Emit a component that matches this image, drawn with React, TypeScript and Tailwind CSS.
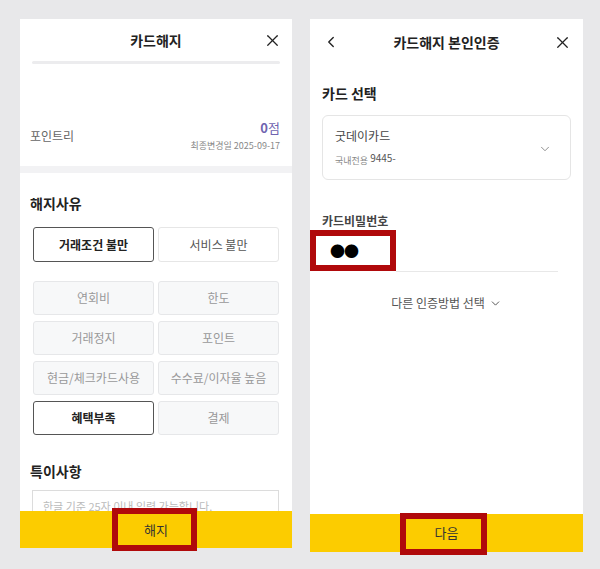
import { ChevronDown, ChevronLeft, X } from "lucide-react";

const font = { fontFamily: '"Noto Sans CJK KR", "Noto Sans", sans-serif' };

const reasons = [
  { label: "연회비", on: false },
  { label: "한도", on: false },
  { label: "거래정지", on: false },
  { label: "포인트", on: false },
  { label: "현금/체크카드사용", on: false },
  { label: "수수료/이자율 높음", on: false },
  { label: "혜택부족", on: true },
  { label: "결제", on: false },
];

function CancelPanel() {
  return (
    <div className="relative w-[272px] h-[529px] flex flex-col bg-[#f2f2f4]">
      <div className="flex-1 overflow-hidden flex flex-col gap-[7px]">
        {/* top card */}
        <div className="shrink-0 bg-white h-[147px] px-[12px]">
          <div className="relative h-[42px] flex items-center justify-center">
            <span className="text-[14px] font-bold text-[#222]">카드해지</span>
            <X className="absolute right-[-2px] top-[12px] w-[19px] h-[19px] text-[#222]" strokeWidth={1.6} />
          </div>
          <div className="h-[3px] rounded-full bg-[#ececee]" />
          <div className="mt-[55px] flex items-end justify-between">
            <span className="text-[12px] text-[#666] ml-[-2px] mb-[8px]">포인트리</span>
            <div className="flex flex-col items-end">
              <span className="text-[13px] text-[#6f64b0] leading-[18px]">
                <b>0</b>점
              </span>
              <span className="text-[9px] text-[#888] leading-[14px] mt-[2px]">최종변경일 2025-09-17</span>
            </div>
          </div>
        </div>

        {/* reasons */}
        <div className="shrink-0 bg-white flex-1 px-[13px] pt-[20px]">
          <div className="text-[14px] font-bold text-[#222] ml-[-3px] leading-[20px]">해지사유</div>
          <div className="mt-[14px] grid grid-cols-2 gap-[4px]">
            <div className="h-[35px] rounded-[3px] border border-[#555] flex items-center justify-center text-[12px] font-bold text-[#222]">
              거래조건 불만
            </div>
            <div className="h-[35px] rounded-[3px] border border-[#e6e6e6] flex items-center justify-center text-[12px] text-[#555]">
              서비스 불만
            </div>
          </div>
          <div className="mt-[19px] grid grid-cols-2 gap-x-[4px] gap-y-[6px]">
            {reasons.map((r) =>
              r.on ? (
                <div
                  key={r.label}
                  className="h-[34px] rounded-[3px] border border-[#555] bg-white flex items-center justify-center text-[12px] font-bold text-[#222]"
                >
                  {r.label}
                </div>
              ) : (
                <div
                  key={r.label}
                  className="h-[34px] rounded-[3px] border border-[#e6e7e9] bg-[#f7f8f9] flex items-center justify-center text-[12px] text-[#999]"
                >
                  {r.label}
                </div>
              )
            )}
          </div>
          <div className="mt-[26px] text-[14px] font-bold text-[#222] ml-[-3px] leading-[20px]">특이사항</div>
          <div className="mt-[9px] ml-[-1px] h-[40px] border border-[#dcdcdc] px-[10px] pt-[7px] text-[11px] text-[#bbb]">
            한글 기준 25자 이내 입력 가능합니다.
          </div>
        </div>
      </div>
      <div className="h-[37px] bg-[#fccc00] flex items-center justify-center text-[13px] text-[#333]">해지</div>
      <div className="absolute left-[92px] top-[489px] w-[85px] h-[43px] border-[6px] border-[#b0090b]" />
    </div>
  );
}

function AuthPanel() {
  return (
    <div className="relative w-[273px] h-[533px] flex flex-col bg-white">
      <div className="flex-1 px-[12px]">
        <div className="relative h-[46px] flex items-center justify-center">
          <ChevronLeft className="absolute left-[0px] top-[14px] w-[18px] h-[18px] text-[#222]" strokeWidth={1.8} />
          <span className="text-[14px] font-bold text-[#222]">카드해지 본인인증</span>
          <X className="absolute right-[-1px] top-[14px] w-[19px] h-[19px] text-[#222]" strokeWidth={1.6} />
        </div>
        <div className="mt-[18px] text-[14px] font-bold text-[#222] leading-[20px]">카드 선택</div>
        <div className="mt-[12px] h-[65px] rounded-[6px] border border-[#e5e5e5] flex items-center justify-between pl-[12px] pr-[18px]">
          <div className="flex flex-col">
            <span className="text-[12px] text-[#444] leading-[18px]">굿데이카드</span>
            <span className="mt-[4px] leading-[16px]">
              <span className="text-[9px] text-[#888]">국내전용 </span>
              <span className="text-[10px] text-[#555] align-[2px]">9445-</span>
            </span>
          </div>
          <ChevronDown className="w-[14px] h-[14px] text-[#888] mt-[2px]" strokeWidth={1.6} />
        </div>
        <div className="mt-[33px] text-[12px] font-bold text-[#444] leading-[16px]">카드비밀번호</div>
        <div className="mt-[6px] h-[41px] flex items-end">
          <div className="w-[74px]" />
          <div className="w-[162px] h-px bg-[#e8e8e8] mb-[4px]" />
        </div>
        <div className="mt-[18px] flex items-center justify-center gap-[4px] text-[12px] text-[#555]">
          <span>다른 인증방법 선택</span>
          <ChevronDown className="w-[13px] h-[13px] text-[#555]" strokeWidth={1.8} />
        </div>
      </div>
      <div className="h-[38px] bg-[#fccc00] flex items-center justify-center text-[13px] text-[#333]">다음</div>
      <div className="absolute left-0 top-[211px] w-[86px] h-[41px] border-[6px] border-[#b0090b] bg-white flex items-center pl-[14px]">
        <span className="text-[15px] text-black tracking-[-1px] leading-none">●●</span>
      </div>
      <div className="absolute left-[90px] top-[494px] w-[87px] h-[42px] border-[6px] border-[#b0090b]" />
    </div>
  );
}

export default function App() {
  return (
    <div className="w-[600px] h-[569px] bg-[#e8e8ea] flex items-start gap-[18px] pt-[19px] pl-[20px]" style={font}>
      <CancelPanel />
      <AuthPanel />
    </div>
  );
}
